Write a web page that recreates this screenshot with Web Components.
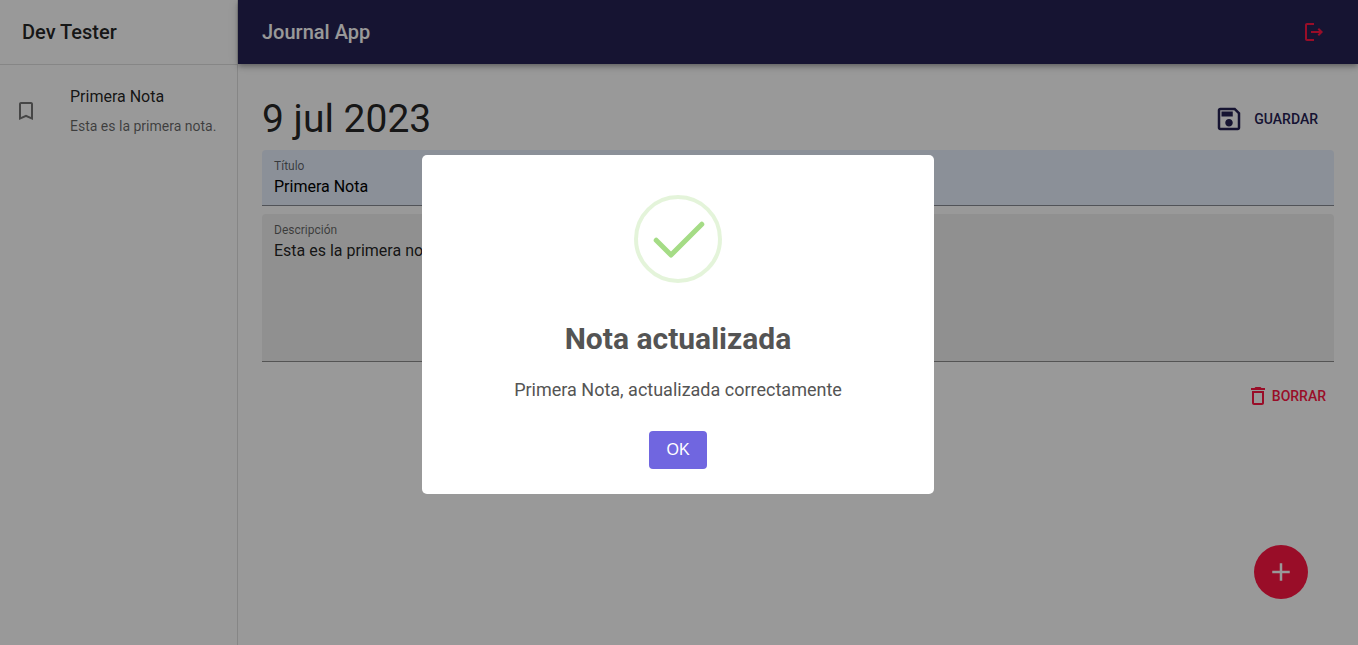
<!DOCTYPE html>
<html lang="es">
<head>
<meta charset="utf-8">
<meta name="viewport" content="width=device-width, initial-scale=1">
<title>Journal App</title>
<style>
  html, body { margin: 0; height: 100%; }
  body { font-family: Roboto, "Liberation Sans", sans-serif; color: rgba(0,0,0,.87); background: #fff; }
</style>
</head>
<body>
<journal-app></journal-app>

<script>
const base = `*{box-sizing:border-box} h1,h2,h3,p{margin:0} button{font:inherit;border:0;background:none;padding:0;margin:0;cursor:pointer;color:inherit} svg{display:block;fill:currentColor}`;

function define(name, css, html) {
  const tpl = document.createElement('template');
  tpl.innerHTML = `<style>${base}${css}</style>${html}`;
  customElements.define(name, class extends HTMLElement {
    constructor() {
      super();
      this.attachShadow({ mode: 'open' }).append(tpl.content.cloneNode(true));
    }
  });
}

const icons = {
  logout: 'M17 8l-1.41 1.41L17.17 11H9v2h8.17l-1.58 1.58L17 16l4-4-4-4zM5 5h7V3H5c-1.1 0-2 .9-2 2v14c0 1.1.9 2 2 2h7v-2H5V5z',
  bookmark: 'M17 3H7c-1.1 0-1.99.9-1.99 2L5 21l7-3 7 3V5c0-1.1-.9-2-2-2zm0 15l-5-2.18L7 18V5h10v13z',
  save: 'M17 3H5c-1.11 0-2 .9-2 2v14c0 1.1.89 2 2 2h14c1.1 0 2-.9 2-2V7l-4-4zm2 16H5V5h11.17L19 7.83V19zm-7-7c-1.66 0-3 1.34-3 3s1.34 3 3 3 3-1.34 3-3-1.34-3-3-3zM6 6h9v4H6z',
  trash: 'M6 19c0 1.1.9 2 2 2h8c1.1 0 2-.9 2-2V7H6v12zM8 9h8v10H8V9zm7.5-5l-1-1h-5l-1 1H5v2h14V4z',
  add: 'M19 13h-6v6h-2v-6H5v-2h6V5h2v6h6v2z'
};

customElements.define('md-icon', class extends HTMLElement {
  constructor() {
    super();
    this.attachShadow({ mode: 'open' });
  }
  connectedCallback() {
    this.shadowRoot.innerHTML = `<style>${base} :host{display:block;flex:none;width:24px;height:24px} :host([large]){width:30px;height:30px} svg{width:100%;height:100%}</style>
      <svg viewBox="0 0 24 24" aria-hidden="true"><path d="${icons[this.getAttribute('name')]}"/></svg>`;
  }
});

define('top-bar', `
  :host{display:flex;align-items:center;justify-content:space-between;height:64px;padding:0 24px;background:#262254;color:#fff;box-shadow:0 2px 4px -1px rgba(0,0,0,.2),0 4px 5px rgba(0,0,0,.14),0 1px 10px rgba(0,0,0,.12)}
  h1{font-size:20px;font-weight:500;line-height:32px}
  button{padding:8px;color:#ff1744}
`, `<h1><slot></slot></h1><button type="button" aria-label="Cerrar sesión"><md-icon name="logout"></md-icon></button>`);

define('note-item', `
  :host{display:block}
  button{display:flex;align-items:center;width:100%;padding:20px 14px 16px;text-align:left}
  md-icon{margin-right:32px;color:rgba(0,0,0,.54)}
  .text{display:grid;gap:6px;line-height:24px;font-size:16px;white-space:nowrap}
  .body{font-size:14px;line-height:22px;color:rgba(0,0,0,.6)}
`, `<button type="button"><md-icon name="bookmark"></md-icon><span class="text"><slot name="title"></slot><span class="body"><slot></slot></span></span></button>`);

define('side-bar', `
  :host{display:block;border-right:1px solid rgba(0,0,0,.12);background:#fff}
  header{display:flex;align-items:center;height:65px;padding:0 22px 1px;border-bottom:1px solid rgba(0,0,0,.12)}
  h2{font-size:20px;font-weight:500;line-height:32px}
`, `<header><h2>Dev Tester</h2></header><nav aria-label="Notas"><slot></slot></nav>`);

customElements.define('filled-field', class extends HTMLElement {
  constructor() {
    super();
    this.attachShadow({ mode: 'open' });
  }
  connectedCallback() {
    const multi = this.hasAttribute('multiline');
    this.shadowRoot.innerHTML = `<style>${base}
      :host{display:flex;flex-direction:column;padding:6px 12px 7px;border-radius:4px 4px 0 0;border-bottom:1px solid rgba(0,0,0,.42);background:rgba(0,0,0,.06)}
      :host([filled]){background:#e8f0fe}
      label{font-size:12px;line-height:20px;color:rgba(0,0,0,.6)}
      input,textarea{display:block;width:100%;margin:0;padding:0;border:0;outline:0;resize:none;background:none;font:inherit;font-size:16px;line-height:22px;color:rgba(0,0,0,.87)}
      input{height:22px;padding-bottom:2px;line-height:20px}
      :host([filled]) input{color:#000}
      textarea{height:114px;overflow:hidden}
    </style><label for="f">${this.getAttribute('label')}</label>` +
      (multi ? '<textarea id="f" rows="5"></textarea>' : '<input id="f" type="text">');
    this.shadowRoot.querySelector('#f').value = this.getAttribute('value');
  }
});

define('text-button', `
  :host{display:block}
  button{display:flex;align-items:center;gap:2px;font-size:14px;font-weight:500;line-height:24px;text-transform:uppercase;padding:6px 8px;color:#ff1744}
  :host([save]) button{gap:10px;padding:13px 16px;color:#262254}
`, `<button type="button"><slot name="icon"></slot><slot></slot></button>`);

define('note-view', `
  :host{display:grid;padding:24px;align-content:start}
  header{display:flex;align-items:center;justify-content:space-between;height:62px}
  h2{font-size:39px;font-weight:400;line-height:60px}
  filled-field{margin-bottom:8px}
  footer{display:flex;justify-content:flex-end;padding-top:8px}
`, `<header><h2>9 jul 2023</h2><text-button save><md-icon slot="icon" name="save" large></md-icon>Guardar</text-button></header>
<filled-field filled label="Título" value="Primera Nota"></filled-field>
<filled-field multiline label="Descripción" value="Esta es la primera nota."></filled-field>
<footer><text-button><md-icon slot="icon" name="trash"></md-icon>Borrar</text-button></footer>`);

define('add-button', `
  :host{position:fixed;right:50px;bottom:46px}
  button{display:grid;place-items:center;width:54px;height:54px;border-radius:50%;background:#ff1744;color:#fff}
`, `<button type="button" aria-label="Nueva nota"><md-icon name="add" large></md-icon></button>`);

define('alert-dialog', `
  :host{position:fixed;inset:0;display:grid;place-items:center;padding:10px 10px 6px 8px;background:rgba(0,0,0,.4)}
  section{display:flex;flex-direction:column;align-items:center;width:512px;max-width:100%;padding:40px 0 25px;border-radius:5px;background:#fff;color:#545454;text-align:center}
  .mark{width:88px;height:88px;fill:none}
  h2{margin-top:36px;font-size:30px;font-weight:700;line-height:40px}
  p{margin-top:19px;font-size:18px;line-height:24px}
  button{margin-top:29px;padding:8px 17px;width:58px;height:38px;border-radius:4px;background:#7066e0;color:#fff;font-family:"Liberation Sans",Arial,sans-serif;font-size:16px;line-height:22px}
`, `<section role="dialog" aria-modal="true" aria-labelledby="t" aria-describedby="d">
<svg class="mark" viewBox="0 0 88 88" aria-hidden="true"><circle cx="44" cy="44" r="42" stroke="#a5dc86" stroke-opacity=".3" stroke-width="4"/><path d="M22.2 45.2 37 60 67.8 29.2" stroke="#a5dc86" stroke-width="5" stroke-linecap="round" stroke-linejoin="round"/></svg>
<h2 id="t"><slot name="title"></slot></h2><p id="d"><slot></slot></p><button type="button">OK</button></section>`);

define('journal-app', `
  :host{display:grid;grid-template-columns:238px minmax(0,1fr);min-height:100%}
  main{display:flex;flex-direction:column}
  top-bar{position:relative}
`, `<side-bar><note-item><span slot="title">Primera Nota</span>Esta es la primera nota.</note-item></side-bar>
<main><top-bar>Journal App</top-bar><note-view></note-view></main>
<add-button></add-button>
<alert-dialog><span slot="title">Nota actualizada</span>Primera Nota, actualizada correctamente</alert-dialog>`);
</script>
</body>
</html>
